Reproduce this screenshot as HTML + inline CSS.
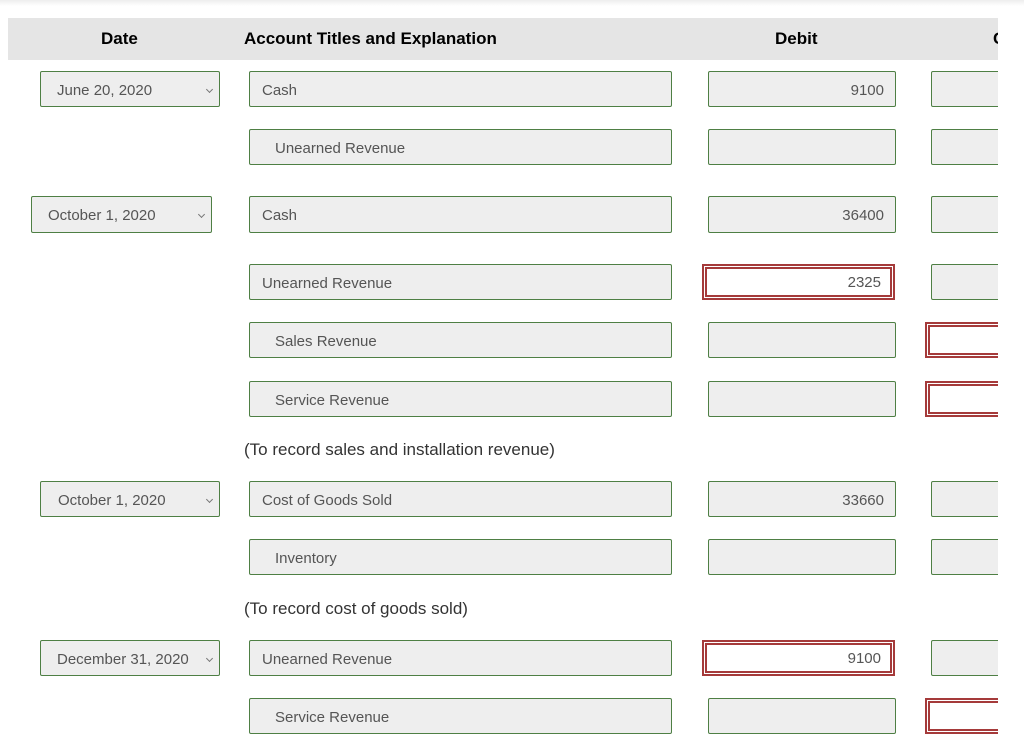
<!DOCTYPE html>
<html><head><meta charset="utf-8"><style>
body{margin:0;width:1024px;height:752px;background:#fff;overflow:hidden;font-family:"Liberation Sans",sans-serif;position:relative}
.top{position:absolute;left:0;top:0;width:1024px;height:6px;background:linear-gradient(#eee,#fff)}
.wrap{position:absolute;left:0;top:0;width:998px;height:752px;overflow:hidden}
.hd{position:absolute;left:8px;top:18px;width:990px;height:42px;background:#e5e5e5}
.h{position:absolute;top:29px;font-weight:bold;font-size:17px;color:#000}
.b{position:absolute;box-sizing:border-box;background:#eee;border:1px solid #4e7f44;border-radius:2px;font-size:15px;color:#555;line-height:37px;white-space:nowrap}
.r{position:absolute;box-sizing:border-box;background:#fff;border:5px double #a53a3a;font-size:15px;color:#555;text-align:right;line-height:28px;padding-right:9px}
.num{text-align:right;padding-right:11px}
.chev{position:absolute;right:7px;top:15px;width:4px;height:4px;border-right:1px solid #777;border-bottom:1px solid #777;transform:rotate(45deg)}
.t{position:absolute;left:244px;font-size:17px;color:#333}
</style></head><body>
<div class="top"></div>
<div class="wrap">
<div class="hd"></div>
<div class="h" style="left:101px">Date</div>
<div class="h" style="left:244px">Account Titles and Explanation</div>
<div class="h" style="left:775px">Debit</div>
<div class="h" style="left:993px">C</div>

<div class="b" style="left:40px;top:71px;width:180px;height:36px;padding-left:16px">June 20, 2020<i class="chev"></i></div>
<div class="b" style="left:249px;top:71px;width:423px;height:36px;padding-left:12px">Cash</div>
<div class="b num" style="left:708px;top:71px;width:188px;height:36px">9100</div>
<div class="b" style="left:931px;top:71px;width:80px;height:36px"></div>

<div class="b" style="left:249px;top:129px;width:423px;height:36px;padding-left:25px">Unearned Revenue</div>
<div class="b" style="left:708px;top:129px;width:188px;height:36px"></div>
<div class="b" style="left:931px;top:129px;width:80px;height:36px"></div>

<div class="b" style="left:31px;top:196px;width:181px;height:37px;padding-left:16px">October 1, 2020<i class="chev"></i></div>
<div class="b" style="left:249px;top:196px;width:423px;height:37px;padding-left:12px">Cash</div>
<div class="b num" style="left:708px;top:196px;width:188px;height:37px">36400</div>
<div class="b" style="left:931px;top:196px;width:80px;height:37px"></div>

<div class="b" style="left:249px;top:264px;width:423px;height:36px;padding-left:12px">Unearned Revenue</div>
<div class="r" style="left:702px;top:264px;width:193px;height:36px">2325</div>
<div class="b" style="left:931px;top:264px;width:80px;height:36px"></div>

<div class="b" style="left:249px;top:322px;width:423px;height:36px;padding-left:25px">Sales Revenue</div>
<div class="b" style="left:708px;top:322px;width:188px;height:36px"></div>
<div class="r" style="left:925px;top:322px;width:90px;height:36px"></div>

<div class="b" style="left:249px;top:381px;width:423px;height:36px;padding-left:25px">Service Revenue</div>
<div class="b" style="left:708px;top:381px;width:188px;height:36px"></div>
<div class="r" style="left:925px;top:381px;width:90px;height:36px"></div>
<div class="t" style="top:440px">(To record sales and installation revenue)</div>

<div class="b" style="left:40px;top:481px;width:180px;height:36px;padding-left:17px">October 1, 2020<i class="chev"></i></div>
<div class="b" style="left:249px;top:481px;width:423px;height:36px;padding-left:12px">Cost of Goods Sold</div>
<div class="b num" style="left:708px;top:481px;width:188px;height:36px">33660</div>
<div class="b" style="left:931px;top:481px;width:80px;height:36px"></div>

<div class="b" style="left:249px;top:539px;width:423px;height:36px;padding-left:25px">Inventory</div>
<div class="b" style="left:708px;top:539px;width:188px;height:36px"></div>
<div class="b" style="left:931px;top:539px;width:80px;height:36px"></div>
<div class="t" style="top:599px">(To record cost of goods sold)</div>

<div class="b" style="left:40px;top:640px;width:180px;height:36px;padding-left:16px">December 31, 2020<i class="chev"></i></div>
<div class="b" style="left:249px;top:640px;width:423px;height:36px;padding-left:12px">Unearned Revenue</div>
<div class="r" style="left:702px;top:640px;width:193px;height:36px">9100</div>
<div class="b" style="left:931px;top:640px;width:80px;height:36px"></div>

<div class="b" style="left:249px;top:698px;width:423px;height:36px;padding-left:25px">Service Revenue</div>
<div class="b" style="left:708px;top:698px;width:188px;height:36px"></div>
<div class="r" style="left:925px;top:698px;width:90px;height:36px"></div>
</div>
</body></html>
